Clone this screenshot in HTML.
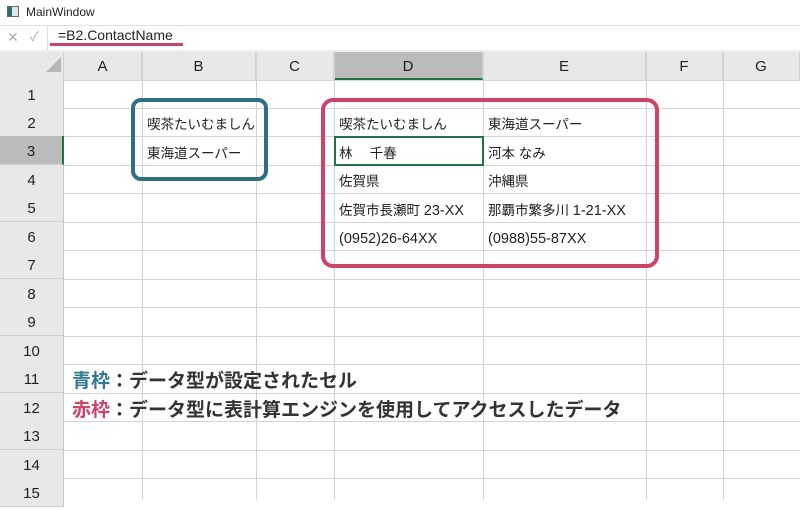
<!DOCTYPE html>
<html><head><meta charset="utf-8"><style>
*{margin:0;padding:0;box-sizing:border-box}
body{width:800px;height:500px;overflow:hidden;background:#fff;position:relative;font-family:"Liberation Sans","Noto Sans CJK JP",sans-serif;color:#222}
.a{position:absolute}
.vl{position:absolute;top:52px;bottom:0;width:1px;background:#d4d4d4}
.hl{position:absolute;left:0;right:0;height:1px;background:#d4d4d4}
.rh{position:absolute;left:0;width:64px;height:29px;background:#e8e8e8;text-align:center;font-size:15px;line-height:31px;color:#222;border-bottom:1px solid #d0d0d0;border-right:1px solid #c8c8c8}
.ch{position:absolute;top:52px;height:28px;background:#e8e8e8;text-align:center;font-size:15px;line-height:29px;border-right:1px solid #d0d0d0}
.t{position:absolute;font-size:13.5px;line-height:28px;white-space:nowrap;color:#222}
.n{font-size:14.5px}
</style></head><body>
<div class="a" style="left:0;top:0;width:800px;height:25px;background:#fff"></div>
<div class="a" style="left:7px;top:6px;width:12px;height:11px;border:1px solid #666;background:#dfe7ea"><div style="width:4px;height:9px;background:#2f6f60"></div></div>
<div class="t" style="left:26px;top:0;line-height:24px;font-size:12px">MainWindow</div>
<div class="a" style="left:0;top:25px;width:800px;height:1px;background:#e0e0e0"></div>
<div class="a" style="left:0;top:26px;width:48px;height:24px;border-right:1px solid #ddd"></div>
<div class="t" style="left:7px;top:25px;line-height:24px;color:#aaa;font-size:14px">✕</div>
<div class="t" style="left:30px;top:25px;line-height:24px;color:#aaa;font-size:13px">✓</div>
<div class="t" style="left:58px;top:23px;line-height:24px;font-size:14px">=B2.ContactName</div>
<div class="a" style="left:50px;top:43px;width:133px;height:3px;background:#cc4466"></div>
<div class="a" style="left:0;top:50px;width:800px;height:2px;background:#eee"></div>

<div class="a" style="left:0;top:52px;width:64px;height:28px;background:#e8e8e8;border-right:1px solid #d0d0d0"></div>
<div class="a" style="left:46px;top:57px;width:0;height:0;border-left:15px solid transparent;border-bottom:15px solid #b5b5b5"></div>
<div class="ch" style="left:64px;width:78px">A</div>
<div class="ch" style="left:142px;width:114px">B</div>
<div class="ch" style="left:256px;width:78px">C</div>
<div class="ch" style="left:334px;width:149px;background:#bcbcbc;border-bottom:2px solid #217346">D</div>
<div class="ch" style="left:483px;width:163px">E</div>
<div class="ch" style="left:646px;width:77px">F</div>
<div class="ch" style="left:723px;width:77px">G</div>

<div class="vl" style="left:142px"></div>
<div class="vl" style="left:256px"></div>
<div class="vl" style="left:334px"></div>
<div class="vl" style="left:483px"></div>
<div class="vl" style="left:646px"></div>
<div class="vl" style="left:723px"></div>
<div class="hl" style="top:80px"></div>
<div class="hl" style="top:108px"></div>
<div class="hl" style="top:136px"></div>
<div class="hl" style="top:165px"></div>
<div class="hl" style="top:193px"></div>
<div class="hl" style="top:222px"></div>
<div class="hl" style="top:250px"></div>
<div class="hl" style="top:279px"></div>
<div class="hl" style="top:307px"></div>
<div class="hl" style="top:336px"></div>
<div class="hl" style="top:364px"></div>
<div class="hl" style="top:393px"></div>
<div class="hl" style="top:421px"></div>
<div class="hl" style="top:450px"></div>
<div class="hl" style="top:478px"></div>

<div class="rh" style="top:80px">1</div>
<div class="rh" style="top:108px">2</div>
<div class="rh" style="top:136px;background:#bcbcbc;border-right:2px solid #217346">3</div>
<div class="rh" style="top:165px">4</div>
<div class="rh" style="top:193px">5</div>
<div class="rh" style="top:222px">6</div>
<div class="rh" style="top:250px">7</div>
<div class="rh" style="top:279px">8</div>
<div class="rh" style="top:307px">9</div>
<div class="rh" style="top:336px">10</div>
<div class="rh" style="top:364px">11</div>
<div class="rh" style="top:393px">12</div>
<div class="rh" style="top:421px">13</div>
<div class="rh" style="top:450px">14</div>
<div class="rh" style="top:478px">15</div>

<div class="t" style="left:147px;top:111px">喫茶たいむましん</div>
<div class="t" style="left:147px;top:140px">東海道スーパー</div>
<div class="a" style="left:334px;top:136px;width:150px;height:30px;border:2px solid #217346"></div>
<div class="t" style="left:339px;top:111px">喫茶たいむましん</div>
<div class="t" style="left:339px;top:140px">林　 千春</div>
<div class="t" style="left:339px;top:168px">佐賀県</div>
<div class="t" style="left:339px;top:197px">佐賀市長瀬町 <span class="n">23-XX</span></div>
<div class="t n" style="left:339px;top:225px">(0952)26-64XX</div>
<div class="t" style="left:488px;top:111px">東海道スーパー</div>
<div class="t" style="left:488px;top:140px">河本 なみ</div>
<div class="t" style="left:488px;top:168px">沖縄県</div>
<div class="t" style="left:488px;top:197px">那覇市繁多川 <span class="n">1-21-XX</span></div>
<div class="t n" style="left:488px;top:225px">(0988)55-87XX</div>

<div class="a" style="left:131px;top:98px;width:137px;height:83px;border:4px solid #2f7080;border-radius:10px"></div>
<div class="a" style="left:321px;top:98px;width:338px;height:170px;border:4px solid #cc4466;border-radius:12px"></div>

<div class="t" style="left:72px;top:368px;font-size:19px;font-weight:bold;color:#333"><span style="color:#2f7a90">青枠</span>：データ型が設定されたセル</div>
<div class="t" style="left:72px;top:397px;font-size:19px;font-weight:bold;color:#333"><span style="color:#cc4466">赤枠</span>：データ型に表計算エンジンを使用してアクセスしたデータ</div>
</body></html>
